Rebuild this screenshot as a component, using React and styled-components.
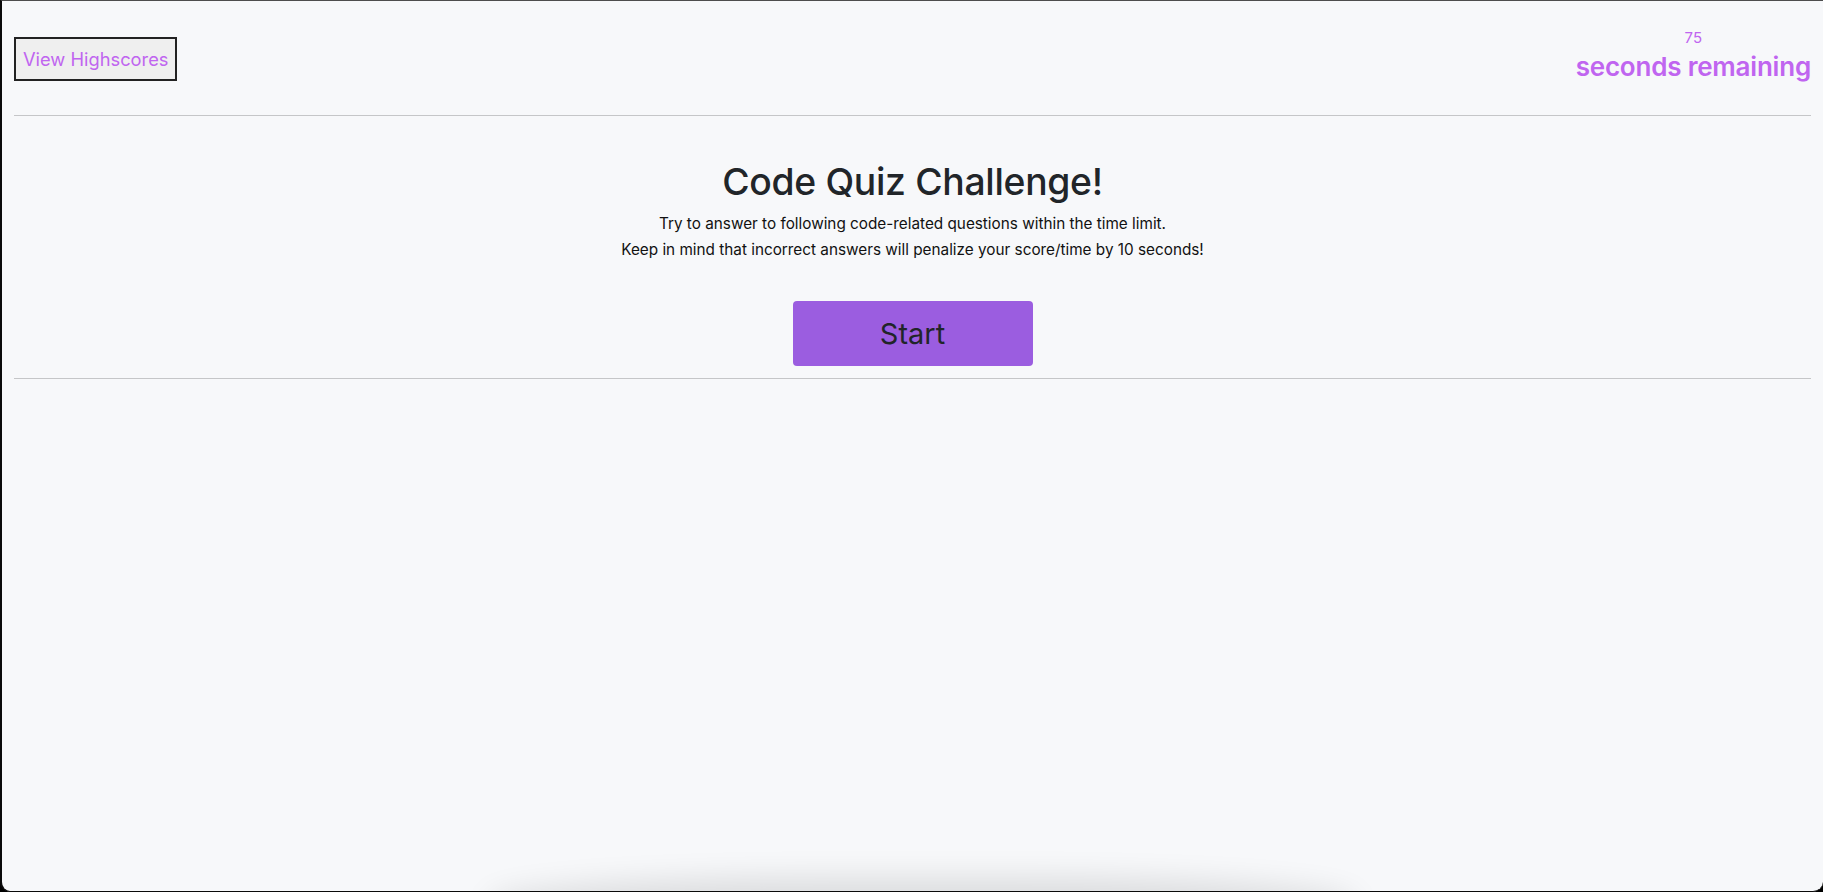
import styled, { createGlobalStyle } from "styled-components";

const GlobalStyle = createGlobalStyle`
  html, body {
    margin: 0;
    padding: 0;
    background: #000;
  }
  body {
    font-family: Inter, "Noto Sans", sans-serif;
    color: #212529;
  }
  * {
    box-sizing: border-box;
  }
`;

const Window = styled.div`
  position: relative;
  height: 892px;
  overflow: hidden;
  background: #f7f8fa;
  border-top: 1px solid #4d4d4d;
  border-left: 2px solid #0a0a0a;
  border-bottom: 1px solid #0a0a0a;
  border-bottom-left-radius: 10px;
  border-bottom-right-radius: 10px;
`;

const Container = styled.div`
  padding: 0 12px;
`;

const Header = styled.header`
  display: flex;
  justify-content: space-between;
  align-items: center;
  height: 114px;
`;

const HighscoresButton = styled.button`
  height: 44px;
  padding: 0 7px;
  margin-top: 1px;
  background: #efefef;
  border: 2px solid #222;
  border-radius: 0;
  color: #c065f0;
  font-family: Inter, "Noto Sans", sans-serif;
  font-size: 18.3px;
  cursor: pointer;
`;

const Timer = styled.div`
  display: flex;
  flex-direction: column;
  align-items: center;
  color: #c065f0;
  margin-top: -7px;
`;

const Count = styled.span`
  font-size: 15px;
  line-height: 22px;
  margin-bottom: 3px;
`;

const TimerLabel = styled.span`
  font-size: 26px;
  font-weight: 600;
  line-height: 30px;
  letter-spacing: -0.2px;
`;

const Rule = styled.hr`
  margin: 0;
  border: 0;
  border-top: 1px solid #c5c6c8;
`;

const Intro = styled.section`
  display: flex;
  flex-direction: column;
  align-items: center;
  text-align: center;
  padding: 42px 0 12px;
`;

const Title = styled.h1`
  margin: 0 0 5px;
  font-size: 37.3px;
  font-weight: 500;
  line-height: 48px;
  letter-spacing: -0.3px;
`;

const Description = styled.p`
  margin: 0;
  font-size: 15.3px;
  line-height: 26px;
  color: #111;
`;

const StartButton = styled.button`
  margin-top: 38px;
  width: 240px;
  height: 65px;
  background: #9b5de0;
  border: none;
  border-radius: 4px;
  color: #212529;
  font-family: Inter, "Noto Sans", sans-serif;
  font-size: 29px;
  cursor: pointer;
`;

const DockShadow = styled.div`
  position: absolute;
  left: 500px;
  right: 480px;
  bottom: -30px;
  height: 30px;
  border-radius: 40%;
  box-shadow: 0 0 30px 14px rgba(0, 0, 0, 0.11);
`;

export default function App() {
  return (
    <>
      <GlobalStyle />
      <Window>
        <Container>
          <Header>
            <HighscoresButton>View Highscores</HighscoresButton>
            <Timer>
              <Count>75</Count>
              <TimerLabel>seconds remaining</TimerLabel>
            </Timer>
          </Header>
          <Rule />
          <Intro>
            <Title>Code Quiz Challenge!</Title>
            <Description>
              Try to answer to following code-related questions within the time limit.
              <br />
              Keep in mind that incorrect answers will penalize your score/time by 10 seconds!
            </Description>
            <StartButton>Start</StartButton>
          </Intro>
          <Rule />
        </Container>
        <DockShadow />
      </Window>
    </>
  );
}
